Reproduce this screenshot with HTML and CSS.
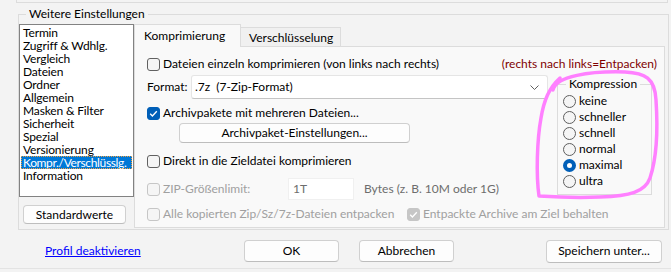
FILE: index.html
```html
<!DOCTYPE html>
<html lang="de">
<head>
  <meta charset="UTF-8">
  <meta name="viewport" content="width=device-width, initial-scale=1.0">
  <title>Weitere Einstellungen</title>
  <link rel="stylesheet" href="styles.css">
</head>
<body>
  <div class="top-frame"></div>

  <fieldset class="group">
    <legend>Weitere Einstellungen</legend>
    <div class="group-inner">
      <div class="side">
        <ul class="listbox">
          <li>Termin</li>
          <li>Zugriff &amp; Wdhlg.</li>
          <li>Vergleich</li>
          <li>Dateien</li>
          <li>Ordner</li>
          <li>Allgemein</li>
          <li>Masken &amp; Filter</li>
          <li>Sicherheit</li>
          <li>Spezial</li>
          <li>Versionierung</li>
          <li class="selected">Kompr./Verschlüsslg.</li>
          <li>Information</li>
        </ul>
        <button class="btn btn-std">Standardwerte</button>
      </div>

      <div class="tabs">
        <div class="tab-bar">
          <div class="tab active">Komprimierung</div>
          <div class="tab">Verschlüsselung</div>
        </div>
        <div class="tab-page">
          <div class="row row-first">
            <label class="check"><span class="cb"></span>Dateien einzeln komprimieren (von links nach rechts)</label>
            <span class="note">(rechts nach links=Entpacken)</span>
          </div>

          <div class="page-body">
            <div class="options">
              <div class="format-row">
                <span class="format-label">Format:</span>
                <div class="combo">
                  <span>.7z&nbsp; (7-Zip-Format)</span>
                  <svg width="9" height="5" viewBox="0 0 9 5"><polyline points="0.5,0.5 4.5,4.5 8.5,0.5" fill="none" stroke="#606060" stroke-width="1"/></svg>
                </div>
              </div>
              <label class="check row-archiv"><span class="cb checked"><svg width="13" height="13" viewBox="0 0 13 13"><polyline points="3.2,6.8 5.4,9 9.8,4.2" fill="none" stroke="#fff" stroke-width="1.3"/></svg></span>Archivpakete mit mehreren Dateien...</label>
              <button class="btn btn-archiv">Archivpaket-Einstellungen...</button>
              <label class="check row-direkt"><span class="cb"></span>Direkt in die Zieldatei komprimieren</label>
              <div class="zip-row">
                <label class="check disabled zip-label"><span class="cb"></span>ZIP-Größenlimit:</label>
                <div class="textbox">1T</div>
                <span class="hint">Bytes (z. B. 10M oder 1G)</span>
              </div>
            </div>

            <fieldset class="kompression">
              <legend>Kompression</legend>
              <label class="radio"><span class="rb"></span>keine</label>
              <label class="radio"><span class="rb"></span>schneller</label>
              <label class="radio"><span class="rb"></span>schnell</label>
              <label class="radio"><span class="rb"></span>normal</label>
              <label class="radio"><span class="rb checked"></span>maximal</label>
              <label class="radio"><span class="rb"></span>ultra</label>
            </fieldset>
          </div>

          <div class="row row-last">
            <label class="check disabled alle-label"><span class="cb"></span>Alle kopierten Zip/Sz/7z-Dateien entpacken</label>
            <label class="check disabled"><span class="cb checked"><svg width="13" height="13" viewBox="0 0 13 13"><polyline points="3.2,6.8 5.4,9 9.8,4.2" fill="none" stroke="#fff" stroke-width="1.3"/></svg></span>Entpackte Archive am Ziel behalten</label>
          </div>
        </div>
      </div>
    </div>
  </fieldset>

  <div class="footer">
    <div class="link-box"><a href="#" class="link">Profil deaktivieren</a></div>
    <button class="btn btn-foot">OK</button>
    <button class="btn btn-foot btn-cancel">Abbrechen</button>
    <button class="btn btn-save">Speichern unter...</button>
  </div>
  <div class="bottom-line"></div>

  <!-- freehand marker drawn over the Kompression box -->
  <svg class="marker" width="671" height="272" viewBox="0 0 671 272">
    <path d="M553 90 C556 76 590 71 625 72 C645 73 655 78 656 100 C658 130 656 160 650 178 C645 192 630 196 600 197 C575 198 555 197 539 196 C536 175 537 140 541 118 C544 100 549 88 560 78" fill="none" stroke="#ff80ff" stroke-width="3.5" stroke-linecap="round" stroke-linejoin="round"/>
  </svg>
</body>
</html>
```

FILE: styles.css
```css
* {
  box-sizing: border-box;
}
body {
  margin: 0;
  width: 671px;
  height: 272px;
  overflow: hidden;
  position: relative;
  background-color: #f3f3f3;
  font-family: Lato, "Noto Sans", sans-serif;
  font-size: 12px;
  line-height: 14px;
  color: #000;
}
.top-frame {
  height: 3px;
  margin: 0 3px 0 16px;
  border: 1px solid #dcdcdc;
  border-top: none;
}
.group {
  margin: 4px 2px 0 18px;
  padding: 0 3px 1px 0;
  border: 1px solid #dcdcdc;
  min-width: 0;
}
.group legend {
  margin-left: 7px;
  padding: 0 3px;
  line-height: 14px;
}
.group-inner {
  display: flex;
  padding-top: 3px;
}
.side {
  width: 115px;
  display: flex;
  flex-direction: column;
}
.listbox {
  list-style: none;
  margin: 0;
  padding: 1px 1px 0 1px;
  height: 173px;
  border: 1px solid #828282;
  background-color: #fff;
}
.listbox li {
  height: 13px;
  line-height: 13px;
  padding-left: 2px;
  letter-spacing: -0.15px;
  white-space: nowrap;
  overflow: hidden;
}
.listbox li.selected {
  background-color: #0078d7;
  color: #fff;
  letter-spacing: -0.35px;
  outline: 1px dotted #f0a040;
  outline-offset: -1px;
}
.btn {
  font-family: inherit;
  font-size: 12px;
  line-height: 14px;
  color: #000;
  background-color: #fdfdfd;
  border: 1px solid #d0d0d0;
  border-bottom-color: #bdbdbd;
  border-radius: 4px;
  padding: 0;
}
.btn-std {
  width: 103px;
  height: 19px;
  margin: 8px 0 0 4px;
}
.tabs {
  width: 531px;
}
.tab-bar {
  display: flex;
  align-items: flex-end;
  height: 22px;
}
.tab {
  height: 19px;
  width: 100px;
  padding-left: 8px;
  line-height: 19px;
  border: 1px solid #dcdcdc;
  border-left: none;
  border-bottom: none;
  background-color: #f0f0f0;
}
.tab.active {
  width: 107px;
  height: 23px;
  margin-bottom: -1px;
  padding-left: 9px;
  line-height: 21px;
  border-left: 1px solid #dcdcdc;
  background-color: #f9f9f9;
  position: relative;
  z-index: 1;
}
.tab-page {
  height: 182px;
  border: 1px solid #dcdcdc;
  background-color: #f9f9f9;
  padding: 10px 7px 0 12px;
}
.row {
  display: flex;
  align-items: center;
  height: 14px;
}
.row-first {
  justify-content: space-between;
}
.note {
  color: #800000;
}
.check {
  display: flex;
  align-items: center;
  height: 14px;
  white-space: nowrap;
}
.cb {
  width: 13px;
  height: 13px;
  margin-right: 3px;
  border: 1px solid #616161;
  border-radius: 3px;
  background-color: #f5f5f5;
  flex-shrink: 0;
  display: flex;
}
.cb.checked {
  background-color: #005fb8;
  border-color: #005fb8;
}
.cb svg {
  margin: -1px;
}
.disabled {
  color: #a0a0a0;
}
.disabled .cb {
  border-color: #c6c6c6;
  background-color: #f5f5f5;
}
.disabled .cb.checked {
  background-color: #c6c6c6;
  border-color: #c6c6c6;
}
.page-body {
  display: flex;
}
.options {
  width: 401px;
  display: flex;
  flex-direction: column;
}
.format-row {
  display: flex;
  align-items: center;
  margin-top: 4px;
  height: 24px;
}
.format-label {
  width: 44px;
}
.combo {
  width: 358px;
  height: 24px;
  display: flex;
  align-items: center;
  justify-content: space-between;
  padding: 0 8px 0 3px;
  background-color: #fff;
  border: 1px solid #e5e5e5;
  border-bottom-color: #c4c4c4;
  border-radius: 3px;
}
.row-archiv {
  margin-top: 7px;
}
.btn-archiv {
  width: 231px;
  height: 20px;
  margin: 3px 0 0 32px;
}
.row-direkt {
  margin-top: 11px;
}
.zip-row {
  display: flex;
  align-items: center;
  margin-top: 10px;
  height: 22px;
}
.zip-label {
  width: 141px;
}
.textbox {
  width: 66px;
  height: 22px;
  line-height: 20px;
  padding-left: 4px;
  color: #6d6d6d;
  background-color: #fff;
  border: 1px solid #f0f0f0;
}
.hint {
  margin-left: 10px;
  color: #6d6d6d;
}
.kompression {
  width: 95px;
  margin: 6px 0 0 9px;
  padding: 2px 0 5px 5px;
  border: 1px solid #dcdcdc;
  align-self: flex-start;
}
.kompression legend {
  margin-left: 3px;
  padding: 0 3px;
  line-height: 14px;
}
.radio {
  display: flex;
  align-items: center;
  height: 16px;
}
.rb {
  width: 13px;
  height: 13px;
  margin-right: 3px;
  border: 1px solid #5f5f5f;
  border-radius: 50%;
  background-color: #f5f5f5;
  flex-shrink: 0;
}
.rb.checked {
  border: 4px solid #005fb8;
  background-color: #fff;
}
.row-last {
  margin-top: 7px;
}
.alle-label {
  width: 260px;
}
.footer {
  display: flex;
  align-items: center;
  height: 22px;
  margin-top: 10px;
  padding-right: 9px;
}
.link-box {
  width: 244px;
  padding-left: 45px;
}
.link {
  color: #0000ff;
}
.btn-foot {
  width: 95px;
  height: 22px;
}
.btn-cancel {
  margin-left: 20px;
}
.btn-save {
  width: 116px;
  height: 23px;
  margin-left: auto;
}
.bottom-line {
  margin-top: 6px;
  border-top: 1px solid #e3e3e3;
}
.marker {
  position: absolute;
  left: 0;
  top: 0;
  pointer-events: none;
}
```
